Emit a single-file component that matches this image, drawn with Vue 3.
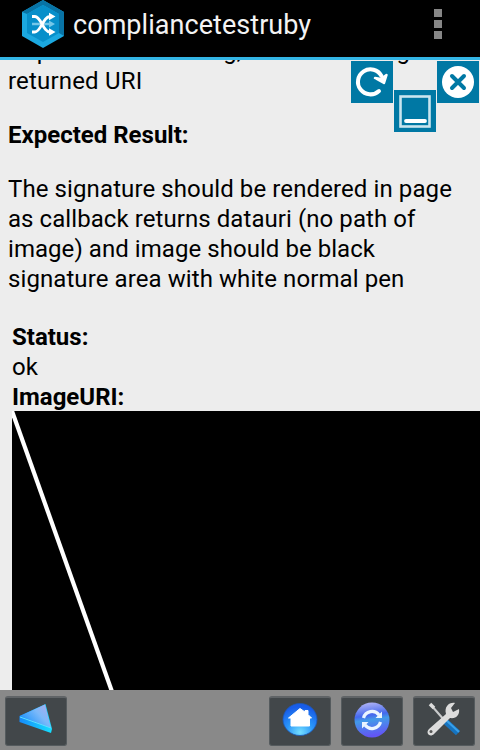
<script setup>
const description = [
  { text: 'The signature should be rendered in page', spacing: 0.1 },
  { text: 'as callback returns datauri (no path of', spacing: 0.07 },
  { text: 'image) and image should be black', spacing: 0.05 },
  { text: 'signature area with white normal pen', spacing: 0.085 },
]
</script>

<template>
  <div class="screen">
    <header class="bar">
      <svg class="logo" width="42" height="48" viewBox="0 0 42 48">
        <path d="M21 0 42 12V36L21 48 0 36V12Z" fill="#1ba8e0" />
        <path d="M21 0 42 12V36L37 33V14L21 5 5 14 0 12Z" fill="#0873a5" />
        <path d="M21 5 37 14V33L21 42 5 33V14Z" fill="#078fca" />
        <path d="M10 24H28" stroke="#75c7e8" stroke-width="2.5" />
        <path d="M27 20.500 33 24 27 27.500Z" fill="#75c7e8" />
        <path d="M10 16.500H13C19 16.500 21 32 28 32M10 32H13C19 32 21 16.500 28 16.500" fill="none" stroke="#fff" stroke-width="2.800" />
        <path d="M27 12.800 33.500 16.500 27 20.200ZM27 28.300 33.500 32 27 35.700Z" fill="#fff" />
      </svg>
      <h1>compliancetestruby</h1>
      <div class="overflow"><i></i><i></i><i></i></div>
    </header>

    <main>
      <p class="intro"><span>Captured as uri string, and show image</span><span class="returned">returned URI</span></p>
      <h2>Expected Result:</h2>
      <p class="description"><span v-for="line in description" :key="line.text" :style="{ letterSpacing: line.spacing + 'px' }">{{ line.text }}</span></p>
      <section class="result">
        <b class="status">Status:</b>
        <span>ok</span>
        <b class="uri">ImageURI:</b>
        <svg class="signature" width="468" height="279" viewBox="0 0 468 279">
          <rect width="468" height="279" fill="#000" />
          <path d="M0 0 100.500 282" stroke="#fff" stroke-width="4.200" />
        </svg>
      </section>
    </main>

    <svg class="controls" width="128" height="71" viewBox="0 0 128 71">
      <g fill="#0078a4"><path d="M0 0H42V42H0ZM86 0H128V42H86ZM43 29H85V71H43Z" /></g>
      <path d="M28 30A12.500 12.500 0 1 1 30.500 15" fill="none" stroke="#fff" stroke-width="4" stroke-linecap="round" />
      <path d="M24 17 30 18 35.500 14 33 22Z" fill="#fff" stroke="#fff" stroke-width="2.500" stroke-linejoin="round" />
      <circle cx="107" cy="21" r="16" fill="#fff" />
      <path d="M101 15 113 27M113 15 101 27" stroke="#0078a4" stroke-width="4" stroke-linecap="round" />
      <rect x="49.500" y="35.500" width="29" height="30" fill="none" stroke="#c9e5ef" stroke-width="2.600" />
      <path d="M55 60H74" stroke="#fff" stroke-width="3.800" stroke-linecap="round" />
    </svg>

    <footer>
      <button aria-label="Back">
        <svg width="62" height="50" viewBox="0 0 62 50">
          <defs><linearGradient id="back" x1="0" y1=".7" x2="1" y2="0"><stop stop-color="#148ffb" /><stop offset=".55" stop-color="#7cb9fa" /><stop offset="1" stop-color="#b3a8ed" /></linearGradient>
          <linearGradient id="edge"><stop stop-color="#168afa" /><stop offset="1" stop-color="#16e0ff" /></linearGradient></defs>
          <path d="M14.500 20 40.500 8 47 33 46 37 14.500 26Z" fill="url(#edge)" />
          <path d="M15 20 40 8.500 46 32Z" fill="url(#back)" />
          <path d="M15 21 46 32" stroke="#65dcff" stroke-width="1" />
        </svg>
      </button>
      <span class="spacer"></span>
      <button aria-label="Home">
        <svg width="62" height="50" viewBox="0 0 62 50">
          <defs><radialGradient id="home" cx=".5" cy=".9" r=".8"><stop stop-color="#75dfff" /><stop offset=".5" stop-color="#2995f9" /><stop offset="1" stop-color="#185ce8" /></radialGradient></defs>
          <ellipse cx="31" cy="23.500" rx="17" ry="16" fill="url(#home)" stroke="#1c58b8" stroke-width=".8" />
          <path d="M31 12.500 36 16V14.500H39V18.500L42.500 22H40.500V30H22V22H19.500Z" fill="#fff" stroke="#fff" stroke-linejoin="round" />
        </svg>
      </button>
      <button aria-label="Refresh">
        <svg width="62" height="50" viewBox="0 0 62 50">
          <defs><linearGradient id="sync" x1="0" y1="0" x2=".15" y2="1"><stop stop-color="#c0bef7" /><stop offset=".42" stop-color="#4468ed" /><stop offset=".55" stop-color="#429ae8" /><stop offset="1" stop-color="#6256f5" /></linearGradient></defs>
          <circle cx="31" cy="24" r="17.500" fill="url(#sync)" />
          <path d="M22.500 22A8.800 8.800 0 0 1 38 19M39.500 26A8.800 8.800 0 0 1 24 29" fill="none" stroke="#eaf5ff" stroke-width="3.200" />
          <path d="M34.500 22H41V15.500ZM27.500 26H21V32.500Z" fill="#eaf5ff" />
        </svg>
      </button>
      <button aria-label="Tools">
        <svg width="62" height="50" viewBox="0 0 62 50">
          <path d="M18 9 32 25" stroke="#c9cbcc" stroke-width="2" /><path d="M17 8 21 12" stroke="#ddd" stroke-width="3.500" />
          <path d="M32 25 45 37" stroke="#1673bf" stroke-width="6" /><path d="M33 24 46 36" stroke="#38a0eb" stroke-width="2" />
          <path d="M16 33 33 18C31 11 36 6 42 7L38 12 40 16 46 13C47 19 43 23 37 22L21 38C17 42 12 37 16 33Z" fill="#dcdcdc" />
          <circle cx="18" cy="35.500" r="1.500" fill="#555" />
        </svg>
      </button>
    </footer>
  </div>
</template>

<style>
body { margin: 0; background: #ededed; }
</style>
<style scoped>
.screen { position: relative; display: flex; flex-direction: column; width: 480px; height: 750px; overflow: hidden; background: #ededed; color: #000; font-family: Roboto, "Liberation Sans", sans-serif; }
.bar { box-sizing: border-box; display: flex; flex: none; height: 60px; padding-left: 22px; background: #000; border-bottom: 3px solid #33b5e5; }
.logo { flex: none; margin-right: 9px; }
h1 { margin: 9px 0 0; font-size: 27px; line-height: 32px; font-weight: 400; letter-spacing: .05px; color: #f3f3f3; }
.overflow { display: flex; flex-direction: column; gap: 3px; margin: 9px 38px 0 auto; }
.overflow i { width: 8px; height: 8px; background: #868686; }
main { display: flex; flex: 1; min-height: 0; flex-direction: column; overflow: hidden; font-size: 24px; line-height: 30px; }
p { margin: 0; }
.intro { margin-top: -24px; }
.intro, .description { padding-left: 8px; }
p span { display: block; width: max-content; white-space: nowrap; }
.returned { letter-spacing: .18px; }
h2 { margin: 24px 0 24px 8px; font-size: 24px; line-height: 30px; width: max-content; }
.result { display: flex; flex-direction: column; align-items: flex-start; margin: 28px 0 0 12px; }
.signature { flex: none; margin-top: -1px; }
.controls { position: absolute; top: 61px; left: 351px; }
footer { box-sizing: border-box; display: flex; flex: none; gap: 10px; height: 60px; padding: 6px 5px 4px; background: #898989; }
button { box-sizing: border-box; flex: none; width: 62px; height: 50px; padding: 0; border: 1px solid #555b5e; border-top: 2px solid #606467; border-radius: 3px; background: #42474a; }
button svg { display: block; margin: -2px 0 0 -1px; }
.spacer { flex: 1; }
</style>
